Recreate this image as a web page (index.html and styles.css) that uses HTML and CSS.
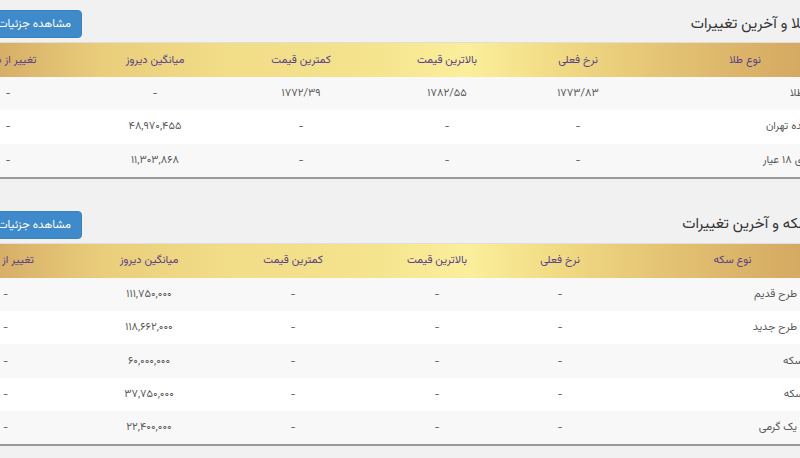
FILE: index.html
```html
<!DOCTYPE html>
<html lang="fa" dir="rtl">
<head>
<meta charset="utf-8">
<title>قیمت طلا و سکه</title>
<link rel="stylesheet" href="styles.css">
</head>
<body>
<div class="viewport">
  <section class="panel panel-gold">
    <div class="panel-head">
      <h2 class="panel-title">قیمت طلا و آخرین تغییرات</h2>
      <div class="head-actions"><a class="btn-details" href="#">مشاهده جزئیات</a></div>
    </div>
    <table class="price-table">
      <colgroup>
        <col class="c-name"><col class="c-cur"><col class="c-w"><col class="c-w"><col class="c-w"><col class="c-last">
      </colgroup>
      <thead>
        <tr><th>نوع طلا</th><th>نرخ فعلی</th><th>بالاترین قیمت</th><th>کمترین قیمت</th><th>میانگین دیروز</th><th>تغییر از دیروز</th></tr>
      </thead>
      <tbody>
        <tr><td class="name">اونس، طلا</td><td>۱۷۷۳/۸۳</td><td>۱۷۸۲/۵۵</td><td>۱۷۷۲/۳۹</td><td>-</td><td>-</td></tr>
        <tr><td class="name">طلا آبشده تهران</td><td>-</td><td>-</td><td>-</td><td>۴۸,۹۷۰,۴۵۵</td><td>-</td></tr>
        <tr><td class="name">گرم طلای ۱۸ عیار</td><td>-</td><td>-</td><td>-</td><td>۱۱,۳۰۳,۸۶۸</td><td>-</td></tr>
      </tbody>
    </table>
  </section>

  <section class="panel panel-coin">
    <div class="panel-head">
      <h2 class="panel-title">قیمت سکه و آخرین تغییرات</h2>
      <div class="head-actions"><a class="btn-details" href="#">مشاهده جزئیات</a></div>
    </div>
    <table class="price-table">
      <colgroup>
        <col class="c-name2"><col class="c-cur2"><col class="c-w2"><col class="c-w2"><col class="c-w2"><col class="c-last2">
      </colgroup>
      <thead>
        <tr><th>نوع سکه</th><th>نرخ فعلی</th><th>بالاترین قیمت</th><th>کمترین قیمت</th><th>میانگین دیروز</th><th>تغییر از دیروز</th></tr>
      </thead>
      <tbody>
        <tr><td class="name">سکه طرح قدیم</td><td>-</td><td>-</td><td>-</td><td>۱۱۱,۷۵۰,۰۰۰</td><td>-</td></tr>
        <tr><td class="name">سکه طرح جدید</td><td>-</td><td>-</td><td>-</td><td>۱۱۸,۶۶۲,۰۰۰</td><td>-</td></tr>
        <tr><td class="name">نیم سکه</td><td>-</td><td>-</td><td>-</td><td>۶۰,۰۰۰,۰۰۰</td><td>-</td></tr>
        <tr><td class="name">ربع سکه</td><td>-</td><td>-</td><td>-</td><td>۳۷,۷۵۰,۰۰۰</td><td>-</td></tr>
        <tr><td class="name">سکه یک گرمی</td><td>-</td><td>-</td><td>-</td><td>۲۲,۴۰۰,۰۰۰</td><td>-</td></tr>
      </tbody>
    </table>
  </section>
</div>
</body>
</html>
```

FILE: styles.css
```css
html, body {
  margin: 0;
  padding: 0;
  background: #f1f1f1;
}
body {
  width: 800px;
  height: 458px;
  overflow: hidden;
  font-family: "Vazirmatn", "Noto Sans Arabic", "DejaVu Sans", sans-serif;
}
.viewport {
  direction: rtl;
  width: 800px;
  overflow: hidden;
}
.panel {
  width: 920px;
  margin-right: -54px;
}
.panel-coin {
  margin-top: 22px;
}
.panel-head {
  display: flex;
  align-items: center;
  justify-content: space-between;
  padding-top: 10px;
  margin-bottom: 4px;
  height: 28px;
}
.panel-title {
  margin: 0;
  padding-right: 5px;
  font-size: 15px;
  font-weight: normal;
  color: #333;
}
.head-actions {
  width: 148px;
  display: flex;
  justify-content: flex-start;
}
.btn-details {
  display: flex;
  align-items: center;
  box-sizing: border-box;
  height: 28px;
  padding: 0 10px;
  background: #3f8acb;
  border: 1px solid #3a81c2;
  border-radius: 4px;
  color: #fff;
  font-size: 11.5px;
  text-decoration: none;
  white-space: nowrap;
}
.price-table {
  width: 920px;
  border-collapse: collapse;
  table-layout: fixed;
  border-bottom: 2px solid #9a9a9a;
  font-size: 11px;
}
.c-name { width: 218px; }
.c-cur { width: 116px; }
.c-w { width: 146px; }
.c-last { width: 148px; }
.c-name2 { width: 243px; }
.c-cur2 { width: 102px; }
.c-w2 { width: 144px; }
.c-last2 { width: 143px; }
.price-table thead tr {
  background: linear-gradient(to right, #cb9d58 0%, #d7ae67 7%, #e9cd7b 18%, #f2dd88 32%, #f4e28c 46%, #fbef9b 58%, #f1da84 68%, #e3c273 80%, #d6ab63 93%, #cfa15c 100%);
  border-top: 1px solid #dedede;
}
.price-table th {
  height: 34px;
  padding: 0;
  font-weight: normal;
  color: #58408a;
  text-align: center;
  white-space: nowrap;
}
.price-table td {
  height: 33.3px;
  padding: 0;
  color: #5a5a5a;
  text-align: center;
  white-space: nowrap;
}
.price-table td.name {
  text-align: right;
  padding-right: 20px;
}
.panel-coin .price-table td.name {
  padding-right: 34px;
}
.price-table tbody tr:nth-child(odd) { background: #f8f8f8; }
.price-table tbody tr:nth-child(even) { background: #ffffff; }
```
